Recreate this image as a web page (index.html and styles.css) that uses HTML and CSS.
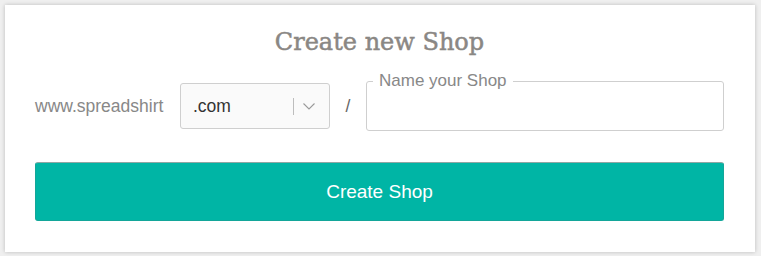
FILE: index.html
```html
<!DOCTYPE html>
<html lang="en">
<head>
<meta charset="utf-8">
<title>Create new Shop</title>
<link rel="stylesheet" href="styles.css">
</head>
<body>
<div class="card">
  <h1 class="title">Create new Shop</h1>
  <div class="row">
    <span class="prefix">www.spreadshirt</span>
    <div class="select">
      <span class="select-value">.com</span>
      <span class="select-sep"></span>
      <svg class="chevron" width="12" height="7" viewBox="0 0 12 7"><path d="M0.5 0.5 L6 6 L11.5 0.5" fill="none" stroke="#9a9a9a" stroke-width="1.1"/></svg>
    </div>
    <span class="slash">/</span>
    <div class="field">
      <span class="field-label">Name your Shop</span>
    </div>
  </div>
  <button class="btn">Create Shop</button>
</div>
</body>
</html>
```
FILE: styles.css
```css
html, body {
  margin: 0;
  padding: 0;
}
body {
  background: #efefef;
  padding: 5px 6px 4px 5px;
  font-family: "Liberation Sans", Arial, sans-serif;
}
.card {
  background: #fff;
  width: 750px;
  height: 247px;
  box-sizing: border-box;
  padding: 22px 31px 0 30px;
  box-shadow: 0 0 4px rgba(0, 0, 0, 0.22);
}
.title {
  margin: 0;
  text-align: center;
  font-family: "DejaVu Serif", serif;
  font-weight: normal;
  font-size: 24px;
  line-height: 30px;
  color: #8a8784;
  -webkit-text-stroke: 0.5px #8a8784;
}
.row {
  display: flex;
  align-items: center;
  height: 50px;
  margin-top: 24px;
}
.prefix {
  font-size: 17.5px;
  color: #888;
  width: 145px;
  flex: none;
}
.select {
  flex: none;
  width: 150px;
  height: 46px;
  box-sizing: border-box;
  border: 1px solid #cfcfcf;
  border-radius: 3px;
  background: #fafafa;
  display: flex;
  align-items: center;
  padding-left: 12px;
}
.select-value {
  font-size: 17.5px;
  color: #333;
  width: 100px;
}
.select-sep {
  width: 1px;
  height: 17px;
  background: #bdbdbd;
  margin-right: 9px;
}
.chevron {
  display: block;
}
.slash {
  flex: none;
  width: 36px;
  text-align: center;
  font-size: 17.5px;
  color: #666;
}
.field {
  position: relative;
  flex: 1;
  height: 50px;
  box-sizing: border-box;
  border: 1px solid #cfcfcf;
  border-radius: 3px;
}
.field-label {
  position: absolute;
  left: 6px;
  top: -11px;
  padding: 0 6px;
  background: #fff;
  font-size: 17px;
  line-height: 20px;
  color: #888;
}
.btn {
  display: block;
  width: 100%;
  height: 59px;
  margin-top: 31px;
  box-sizing: border-box;
  border: 1px solid #13a699;
  border-top-color: #8fa7a4;
  border-radius: 3px;
  background: #00b5a5;
  color: #fff;
  font-family: "Liberation Sans", Arial, sans-serif;
  font-size: 19px;
  cursor: pointer;
}
```
